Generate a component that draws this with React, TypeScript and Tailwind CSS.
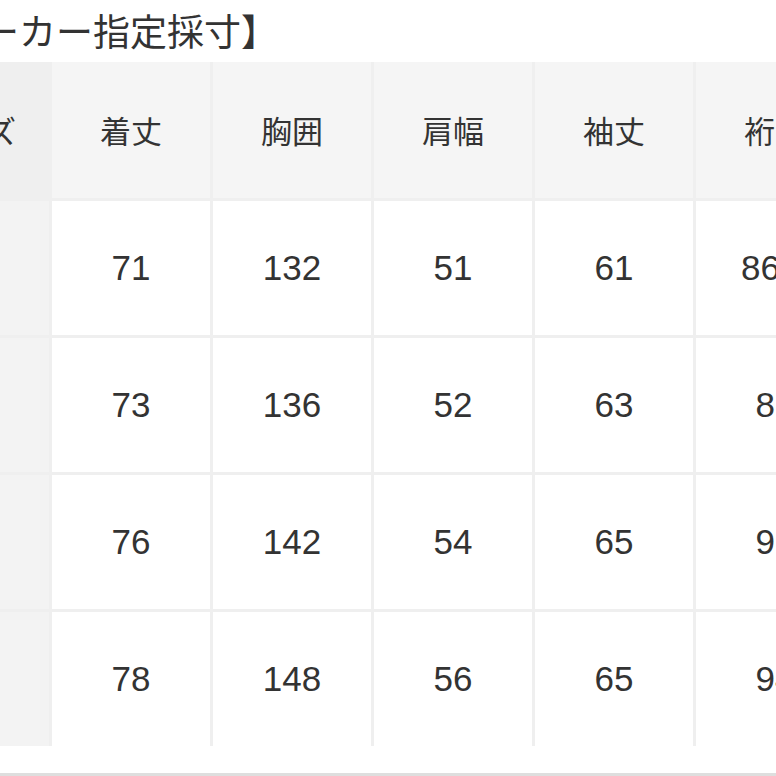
const headers = ["サイズ", "着丈", "胸囲", "肩幅", "袖丈", "裄丈"];

const rows = [
    ["S", "71", "132", "51", "61", "86.5"],
    ["M", "73", "136", "52", "63", "89"],
    ["L", "76", "142", "54", "65", "92"],
    ["XL", "78", "148", "56", "65", "94"],
];

const jp = { fontFamily: '"Noto Sans CJK JP", "Noto Sans", sans-serif' };
const num = { fontFamily: '"Liberation Sans", Arial, sans-serif' };

export default function App() {
    return (
        <div className="w-[776px] h-[776px] overflow-hidden bg-white text-[#333]">
            <div
                className="h-[62px] ml-[-92px] pt-[7px] text-[37px] leading-[46px] whitespace-nowrap"
                style={jp}
            >
                【メーカー指定採寸】
            </div>
            <div className="ml-[-109px] w-max grid grid-cols-[158px_158px_158px_158px_158px_158px] grid-rows-[136px_134px_134px_134px_134px] gap-[3px] bg-[#efefef]">
                {headers.map((h, i) => (
                    <div
                        key={h}
                        className={`flex items-center justify-center text-[31px] ${
                            i === 0 ? "bg-[#efefef]" : "bg-[#f5f5f5]"
                        }`}
                        style={jp}
                    >
                        {h}
                    </div>
                ))}
                {rows.map((r) =>
                    r.map((v, i) => (
                        <div
                            key={r[0] + i}
                            className={`flex items-center justify-center text-[35px] ${
                                i === 0 ? "bg-[#f3f3f3]" : "bg-white"
                            }`}
                            style={num}
                        >
                            {v}
                        </div>
                    ))
                )}
            </div>
            <div className="mt-[27px] h-[3px] bg-[#dedede]" />
        </div>
    );
}
